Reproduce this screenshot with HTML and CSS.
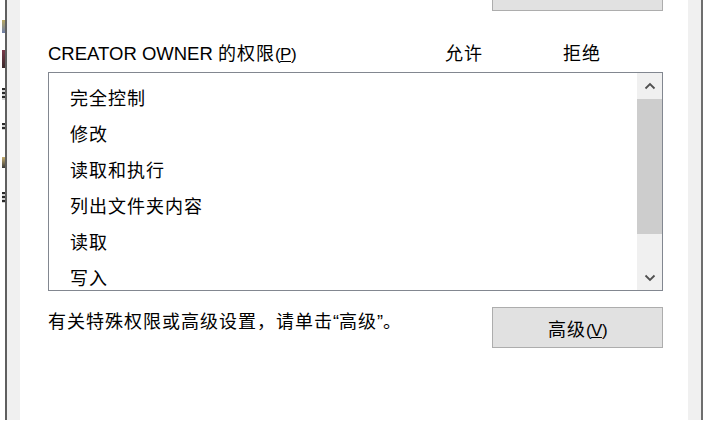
FILE: index.html
```html
<!DOCTYPE html>
<html lang="zh-CN">
<head>
<meta charset="utf-8">
<title>CREATOR OWNER 的权限</title>
<link rel="stylesheet" href="styles.css">
</head>
<body>
<div class="window">
  <div class="behind">
    <div class="mark m1"></div>
    <div class="mark m2"></div>
    <div class="mark m3"></div>
    <div class="mark m4"></div>
    <div class="mark m5"></div>
    <div class="mark m6"></div>
  </div>
  <div class="frame frame-l"></div>
  <div class="band"></div>
  <div class="content">
    <div class="btn btn-top"></div>
    <div class="header">
      <div class="t"><span class="lat">CREATOR OWNER </span>的权限<span class="lat acc">(<u>P</u>)</span></div>
      <div class="t">允许</div>
      <div class="t">拒绝</div>
    </div>
    <div class="list">
      <div class="items">
        <div class="t row">完全控制</div>
        <div class="t row">修改</div>
        <div class="t row">读取和执行</div>
        <div class="t row">列出文件夹内容</div>
        <div class="t row">读取</div>
        <div class="t row">写入</div>
      </div>
      <div class="scrollbar">
        <div class="arrow up">
          <svg width="12" height="8" viewBox="0 0 12 8"><path d="M1.5 6.5 L6 2 L10.5 6.5" fill="none" stroke="#505050" stroke-width="1.8"/></svg>
        </div>
        <div class="thumb"></div>
        <div class="track"></div>
        <div class="arrow down">
          <svg width="12" height="8" viewBox="0 0 12 8"><path d="M1.5 1.5 L6 6 L10.5 1.5" fill="none" stroke="#505050" stroke-width="1.8"/></svg>
        </div>
      </div>
    </div>
    <div class="footer">
      <div class="t note">有关特殊权限或高级设置，请单击<span class="q">“</span>高级<span class="q">”</span>。</div>
      <div class="btn btn-adv"><span class="t">高级<span class="lat acc">(<u>V</u>)</span></span></div>
    </div>
  </div>
  <div class="band"></div>
  <div class="frame frame-r"></div>
  <div class="after"></div>
</div>
</body>
</html>
```

FILE: styles.css
```css
html, body {
  margin: 0;
  padding: 0;
  background: #ffffff;
}

body {
  width: 707px;
  height: 425px;
  overflow: hidden;
}

.window {
  display: flex;
  height: 420px;
}

.behind {
  width: 5px;
  display: flex;
  flex-direction: column;
  padding-left: 2px;
  box-sizing: border-box;
}

.mark {
  width: 3px;
  background: #3a3a3a;
}
.m1 { margin-top: 20px; height: 13px; background: linear-gradient(#b8a860, #6f7fa8); }
.m2 { margin-top: 17px; height: 18px; background: linear-gradient(#7a3a4a, #3a2a2a); }
.m3 { margin-top: 20px; height: 12px; background: repeating-linear-gradient(#2a2a2a 0 2px, #d0d0d0 2px 4px); }
.m4 { margin-top: 23px; height: 7px; background: repeating-linear-gradient(#2a2a2a 0 2px, #d0d0d0 2px 4px); }
.m5 { margin-top: 27px; height: 11px; background: linear-gradient(#c8b070, #3a3a3a); }
.m6 { margin-top: 24px; height: 11px; background: repeating-linear-gradient(#2a2a2a 0 2px, #d0d0d0 2px 4px); }

.frame {
  width: 2px;
  background: #5f5f5f;
}
.frame-r {
  background: #6e6e6e;
}

.band {
  width: 13px;
  background: #f0f0f0;
}

.after {
  width: 4px;
}

.content {
  width: 668px;
  padding: 0 25px 0 28px;
  box-sizing: border-box;
  background: #ffffff;
}

.t {
  font-family: "Noto Sans CJK SC", "Liberation Sans", sans-serif;
  font-size: 18px;
  letter-spacing: 1px;
  color: #000000;
  white-space: nowrap;
}

.lat {
  font-family: "Liberation Sans", "Noto Sans CJK SC", sans-serif;
  font-size: 18.5px;
  letter-spacing: 0;
}

.acc {
  font-size: 17px;
  letter-spacing: -0.5px;
}

.btn {
  box-sizing: border-box;
  width: 171px;
  background: #e1e1e1;
  border: 1px solid #adadad;
}

.btn-top {
  height: 42px;
  margin-top: -31px;
  margin-left: auto;
}

.header {
  display: grid;
  grid-template-columns: 397px 118px 100px;
  margin-top: 29px;
  height: 24px;
  line-height: 24px;
}

.list {
  margin-top: 8px;
  height: 219px;
  box-sizing: border-box;
  border: 1px solid #828790;
  display: flex;
  overflow: hidden;
}

.items {
  flex: 1;
  padding: 6px 0 0 21px;
  overflow: hidden;
}

.row {
  height: 36px;
  line-height: 36px;
}

.scrollbar {
  width: 25px;
  background: #f0f0f0;
  display: flex;
  flex-direction: column;
}

.arrow {
  display: flex;
  align-items: center;
  justify-content: center;
}
.arrow.up { height: 26px; }
.arrow.down { height: 25px; }

.thumb {
  height: 135px;
  background: #cdcdcd;
}

.track {
  height: 31px;
}

.footer {
  margin-top: 16px;
  display: flex;
  justify-content: space-between;
  align-items: flex-start;
}

.note {
  height: 24px;
  line-height: 24px;
  padding-top: 1px;
}

.q {
  font-family: "Liberation Sans", sans-serif;
  letter-spacing: 0;
}

.btn-adv {
  height: 41px;
  display: flex;
  align-items: center;
  justify-content: center;
}
```
